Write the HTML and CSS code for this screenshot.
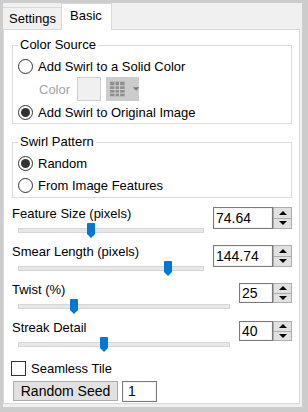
FILE: index.html
```html
<!DOCTYPE html>
<html lang="en">
<head>
  <meta charset="UTF-8">
  <meta name="viewport" content="width=device-width, initial-scale=1.0">
  <title>Swirl</title>
  <link rel="stylesheet" href="styles.css">
</head>
<body>
  <div class="window">
    <div class="tabs">
      <div class="tab">Settings</div>
      <div class="tab active">Basic</div>
    </div>

    <div class="panel">
      <fieldset class="group">
        <legend>Color Source</legend>
        <div class="option"><span class="radio"></span>Add Swirl to a Solid Color</div>
        <div class="color-row">
          <span class="muted">Color</span>
          <span class="swatch"></span>
          <span class="picker">
            <svg width="16" height="16" viewBox="0 0 16 16">
              <rect x="0" y="0" width="16" height="16" fill="#8f8f8f"/>
              <path d="M5.5 0V16M10.5 0V16M0 4.5H16M0 8.5H16M0 12.5H16" stroke="#d9d9d9" stroke-width="1"/>
            </svg>
            <svg class="caret" width="7" height="4" viewBox="0 0 7 4"><path d="M0 0H7L3.5 4Z" fill="#7a7a7a"/></svg>
          </span>
        </div>
        <div class="option"><span class="radio checked"></span>Add Swirl to Original Image</div>
      </fieldset>

      <fieldset class="group group-pattern">
        <legend>Swirl Pattern</legend>
        <div class="option"><span class="radio checked"></span>Random</div>
        <div class="option"><span class="radio"></span>From Image Features</div>
      </fieldset>

      <div class="settings">
        <div class="setting">
          <div class="setting-label">Feature Size (pixels)</div>
          <div class="slider">
            <div class="track"></div>
            <svg class="thumb" style="left: 37%" width="8" height="15" viewBox="0 0 8 15"><path d="M0 1Q0 0 1 0H7Q8 0 8 1V11L4 15L0 11Z" fill="#0078d7"/></svg>
          </div>
          <div class="spin-field">
            <span class="num">74.64</span>
            <span class="spin"><span class="up"></span><span class="down"></span></span>
          </div>
        </div>

        <div class="setting">
          <div class="setting-label">Smear Length (pixels)</div>
          <div class="slider">
            <div class="track"></div>
            <svg class="thumb" style="left: 78.5%" width="8" height="15" viewBox="0 0 8 15"><path d="M0 1Q0 0 1 0H7Q8 0 8 1V11L4 15L0 11Z" fill="#0078d7"/></svg>
          </div>
          <div class="spin-field">
            <span class="num">144.74</span>
            <span class="spin"><span class="up"></span><span class="down"></span></span>
          </div>
        </div>

        <div class="setting narrow">
          <div class="setting-label">Twist (%)</div>
          <div class="slider">
            <div class="track"></div>
            <svg class="thumb" style="left: 24.5%" width="8" height="15" viewBox="0 0 8 15"><path d="M0 1Q0 0 1 0H7Q8 0 8 1V11L4 15L0 11Z" fill="#0078d7"/></svg>
          </div>
          <div class="spin-field">
            <span class="num">25</span>
            <span class="spin"><span class="up"></span><span class="down"></span></span>
          </div>
        </div>

        <div class="setting narrow">
          <div class="setting-label">Streak Detail</div>
          <div class="slider">
            <div class="track"></div>
            <svg class="thumb" style="left: 38.7%" width="8" height="15" viewBox="0 0 8 15"><path d="M0 1Q0 0 1 0H7Q8 0 8 1V11L4 15L0 11Z" fill="#0078d7"/></svg>
          </div>
          <div class="spin-field">
            <span class="num">40</span>
            <span class="spin"><span class="up"></span><span class="down"></span></span>
          </div>
        </div>
      </div>

      <div class="check-row"><span class="checkbox"></span>Seamless Tile</div>

      <div class="seed-row">
        <span class="button">Random Seed</span>
        <span class="seed">1</span>
      </div>
    </div>
  </div>
</body>
</html>
```

FILE: styles.css
```css
* {
  box-sizing: border-box;
}
body {
  margin: 0;
  background-color: #cccccc;
  font-family: "Liberation Sans", Arial, sans-serif;
  font-size: 13px;
  color: #000;
}
.window {
  margin: 3px 6px 5px 3px;
  height: 404px;
  background-color: #f0f0f0;
  display: flex;
  flex-direction: column;
}

/* tabs */
.tabs {
  height: 26px;
  display: flex;
  align-items: flex-end;
}
.tab {
  height: 22px;
  line-height: 21px;
  padding: 0 5px 0 6px;
  border: 1px solid #d9d9d9;
  border-left: none;
  border-bottom: none;
  background-color: #f0f0f0;
}
.tab.active {
  height: 27px;
  line-height: 24px;
  margin-left: -1px;
  margin-bottom: -1px;
  padding: 0 9px 0 8px;
  border-left: 1px solid #d9d9d9;
  background-color: #fff;
  position: relative;
  z-index: 1;
}

.panel {
  flex: 1;
  margin: 0 2px 3px 0;
  padding: 0 7px 0 8px;
  background-color: #fff;
  border: 1px solid #d9d9d9;
}

/* group boxes */
.group {
  margin: 7px 0 0;
  padding: 2px 0 0 5px;
  border: 1px solid #dcdcdc;
  min-width: 0;
}
.group legend {
  padding: 0 2px;
  line-height: 16px;
}
.group-pattern {
  margin-top: 10px;
  padding-bottom: 1px;
}
.option {
  display: flex;
  align-items: center;
  gap: 5px;
  height: 22px;
}
.radio {
  width: 15px;
  height: 15px;
  border: 1px solid #333;
  border-radius: 50%;
  background-color: #fff;
  display: flex;
  align-items: center;
  justify-content: center;
}
.radio.checked::after {
  content: "";
  width: 9px;
  height: 9px;
  border-radius: 50%;
  background-color: #333;
}
.color-row {
  display: flex;
  align-items: center;
  height: 24px;
  padding-left: 21px;
}
.muted {
  color: #a3a3a3;
  width: 38px;
}
.swatch {
  width: 24px;
  height: 24px;
  border: 1px solid #cfcfcf;
  background-color: #f0f0f0;
}
.picker {
  margin-left: 5px;
  width: 33px;
  height: 24px;
  background-color: #cccccc;
  display: flex;
  align-items: center;
  padding-left: 4px;
  gap: 8px;
}

/* sliders */
.settings {
  margin-top: 8px;
}
.setting {
  display: grid;
  grid-template-columns: 1fr 79px;
  column-gap: 9px;
  margin-bottom: 5px;
}
.setting.narrow {
  grid-template-columns: 1fr 53px;
}
.setting-label {
  grid-column: 1;
  grid-row: 1;
  line-height: 16px;
}
.slider {
  grid-column: 1;
  grid-row: 2;
  height: 17px;
  margin-left: 6px;
  position: relative;
}
.track {
  margin-top: 6px;
  height: 5px;
  border: 1px solid #d6d6d6;
  background-color: #e7e7e7;
}
.thumb {
  position: absolute;
  top: 1px;
}
.spin-field {
  grid-column: 2;
  grid-row: 1 / span 2;
  align-self: start;
  margin-top: 1px;
  display: flex;
  height: 22px;
}
.narrow .spin-field {
  height: 20px;
}
.num {
  flex: 1;
  border: 1px solid #7a7a7a;
  box-shadow: inset 0 0 0 1px #f4f4f4;
  padding-left: 2px;
  display: flex;
  align-items: center;
  font-size: 14px;
}
.spin {
  width: 19px;
  border: 1px solid #adadad;
  background-color: #e1e1e1;
  display: flex;
  flex-direction: column;
}
.spin span {
  flex: 1;
  display: flex;
  align-items: center;
  justify-content: center;
}
.spin .up {
  border-bottom: 1px solid #adadad;
}
.spin .up::after {
  content: "";
  border: 4px solid transparent;
  border-top: none;
  border-bottom: 4px solid #000;
}
.spin .down::after {
  content: "";
  border: 4px solid transparent;
  border-bottom: none;
  border-top: 4px solid #000;
}

/* bottom rows */
.check-row {
  display: flex;
  align-items: center;
  gap: 5px;
  height: 20px;
  margin-top: 2px;
  margin-left: -1px;
}
.checkbox {
  width: 15px;
  height: 15px;
  border: 1px solid #333;
  background-color: #fff;
}
.seed-row {
  display: flex;
  align-items: flex-start;
  gap: 4px;
  margin-top: 3px;
  margin-left: 1px;
}
.button {
  width: 105px;
  height: 20px;
  line-height: 18px;
  text-align: center;
  border: 1px solid #adadad;
  background-color: #e1e1e1;
  font-size: 14px;
}
.seed {
  width: 35px;
  height: 21px;
  line-height: 19px;
  padding-left: 5px;
  border: 1px solid #7a7a7a;
  box-shadow: inset 0 0 0 1px #f4f4f4;
  font-size: 14px;
}
```
